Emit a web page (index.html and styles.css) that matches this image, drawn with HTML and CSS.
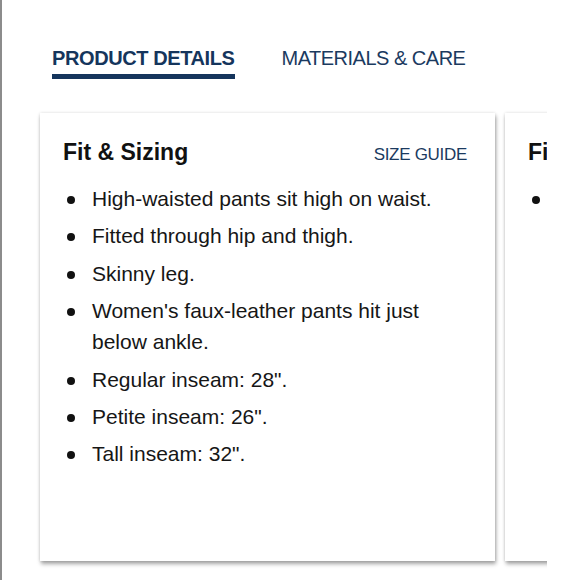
FILE: index.html
```html
<!DOCTYPE html>
<html lang="en">
<head>
<meta charset="utf-8">
<title>Product details</title>
<link rel="stylesheet" href="styles.css">
</head>
<body>
<div class="page">
  <nav class="tabs">
    <a class="tab tab-active" href="#">PRODUCT DETAILS</a>
    <a class="tab" href="#">MATERIALS &amp; CARE</a>
  </nav>
  <div class="carousel">
    <div class="track">
      <section class="card">
        <header class="card-head">
          <h2 class="card-title">Fit &amp; Sizing</h2>
          <a class="card-link" href="#">SIZE GUIDE</a>
        </header>
        <ul class="bullets">
          <li>High-waisted pants sit high on waist.</li>
          <li>Fitted through hip and thigh.</li>
          <li>Skinny leg.</li>
          <li>Women's faux-leather pants hit just below ankle.</li>
          <li>Regular inseam: 28".</li>
          <li>Petite inseam: 26".</li>
          <li>Tall inseam: 32".</li>
        </ul>
      </section>
      <section class="card">
        <header class="card-head">
          <h2 class="card-title">Fit &amp; Sizing</h2>
        </header>
        <ul class="bullets">
          <li>Model is 5'10".</li>
        </ul>
      </section>
    </div>
  </div>
</div>
</body>
</html>
```

FILE: styles.css
```css
* { box-sizing: border-box; }
html, body { margin: 0; padding: 0; background: #fff; }
body { font-family: "Liberation Sans", Arial, sans-serif; color: #161616; }

.page {
  min-height: 580px;
  border-left: 2px solid #8c8c8c;
}

.tabs {
  display: flex;
  align-items: baseline;
  gap: 47px;
  padding: 46px 0 0 50px;
}
.tab {
  font-size: 20px;
  line-height: 24px;
  letter-spacing: -0.5px;
  color: #1b3a5f;
  text-decoration: none;
  padding-bottom: 4px;
  border-bottom: 5px solid transparent;
}
.tab-active {
  font-weight: bold;
  letter-spacing: -0.4px;
  color: #15355c;
  border-bottom-color: #15355c;
}

.carousel {
  width: 545px;
  overflow: hidden;
  margin-top: 30px;
  padding: 4px 0 12px 0;
}
.track {
  display: flex;
  gap: 10px;
  padding-left: 38px;
}
.card {
  flex: none;
  width: 455px;
  height: 448px;
  background: #fff;
  padding: 25px 28px 0 23px;
  box-shadow: 1px 3px 4px rgba(0,0,0,0.35), 0 0 3px rgba(0,0,0,0.12);
}
.card-head {
  display: flex;
  justify-content: space-between;
  align-items: baseline;
}
.card-title {
  margin: 0;
  font-size: 23px;
  line-height: 28px;
  font-weight: bold;
  color: #111;
}
.card-link {
  font-size: 17px;
  letter-spacing: -0.3px;
  color: #1b3a5f;
  text-decoration: none;
}
.bullets {
  list-style: none;
  margin: 17px 0 0 0;
  padding: 0;
}
.bullets li {
  display: flex;
  align-items: flex-start;
  font-size: 21px;
  line-height: 31px;
  margin-bottom: 6.4px;
}
.bullets li::before {
  content: "";
  flex: none;
  width: 8px;
  height: 8px;
  border-radius: 50%;
  background: #111;
  margin: 13px 17px 0 4px;
}
```
